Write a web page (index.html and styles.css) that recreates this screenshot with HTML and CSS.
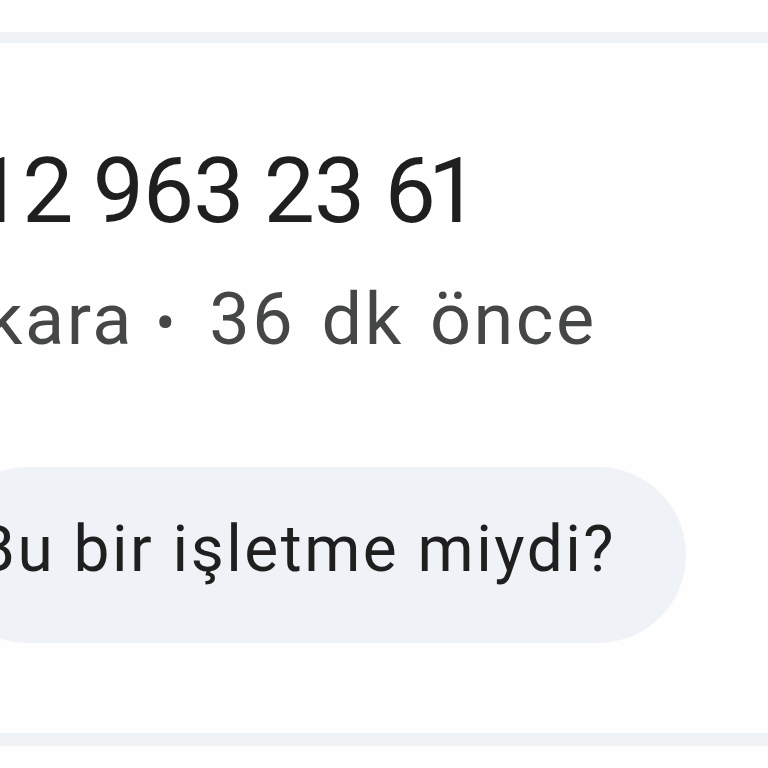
FILE: index.html
```html
<!DOCTYPE html>
<html lang="tr">
<head>
<meta charset="utf-8">
<link rel="stylesheet" href="styles.css">
</head>
<body>
<div class="screen">
  <div class="top"></div>
  <div class="divider divider-top"></div>
  <section class="card">
    <div class="number">12 963 23 <span class="tight">6</span>1</div>
    <div class="meta">kara<span class="sep"> <span class="dot">•</span> </span>36 dk önce</div>
    <div class="pill">Bu bir işletme miydi?</div>
  </section>
  <div class="divider divider-bottom"></div>
  <div class="rest"></div>
</div>
</body>
</html>
```
FILE: styles.css
```css
html, body {
  margin: 0;
  padding: 0;
  background: #fefefe;
}
.screen {
  width: 768px;
  height: 768px;
  overflow: hidden;
  font-family: Roboto, "Noto Sans", sans-serif;
}
.top {
  height: 32px;
}
.divider {
  background: #eff3f6;
}
.divider-top {
  height: 11px;
}
.divider-bottom {
  height: 13px;
}
.card {
  height: 690px;
  overflow: hidden;
  display: flex;
  flex-direction: column;
  align-items: flex-start;
}
.number {
  margin-top: 98px;
  margin-left: -28px;
  font-size: 91px;
  line-height: 100px;
  letter-spacing: -1px;
  word-spacing: -1px;
  color: #1f1f1f;
  white-space: nowrap;
}
.tight {
  letter-spacing: -8px;
}
.meta {
  margin-top: 39px;
  margin-left: -14px;
  font-size: 72px;
  line-height: 80px;
  letter-spacing: 2.5px;
  word-spacing: 6px;
  color: #444746;
  white-space: nowrap;
}
.sep {
  word-spacing: 1px;
  padding-right: 10px;
}
.dot {
  font-size: 60px;
}
.pill {
  margin-top: 103px;
  margin-left: -60px;
  height: 166px;
  padding: 0 70px 10px 35px;
  border-radius: 88px;
  background: #eff2f7;
  font-size: 64px;
  line-height: 166px;
  letter-spacing: 2.5px;
  color: #1f1f1f;
  white-space: nowrap;
}
```
